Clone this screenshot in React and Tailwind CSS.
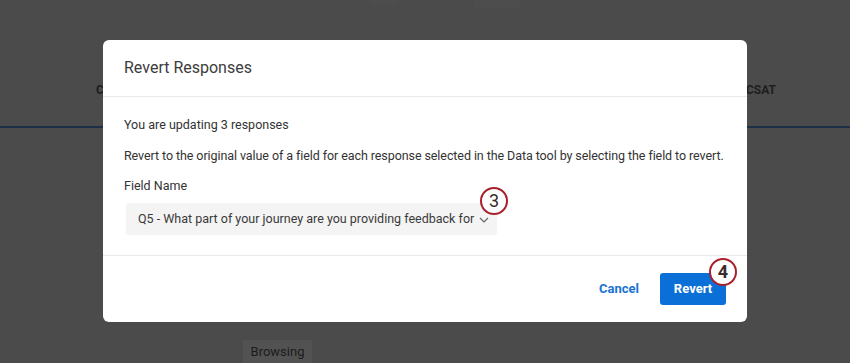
import React from "react";

function Badge({ n }) {
  return (
    <div className="w-[28px] h-[28px] rounded-full border-[2.5px] border-[#a8202b] bg-white flex items-center justify-center text-[18px] leading-none text-[#3b2b2b]" style={{ fontFamily: "Roboto, sans-serif" }}>
      {n}
    </div>
  );
}

export default function App() {
  return (
    <div className="relative w-[850px] h-[363px] overflow-hidden bg-[#4b4b4b]" style={{ fontFamily: "Roboto, 'Liberation Sans', sans-serif" }}>
      {/* background page */}
      <div className="flex flex-col h-full">
        <div className="h-[8px] flex">
          <div className="ml-[370px] w-[28px] h-[4px] bg-[#4d4d4d]" />
          <div className="ml-[76px] w-[46px] h-[8px] bg-[#4d4d4d]" />
        </div>
        <div className="h-[120px] flex items-end border-b-[2px] border-[#1c2f45]">
          <div className="flex w-full items-center h-[60px] pb-[12px] text-[12px] font-bold text-[#1e1e1e]">
            <span className="ml-[96px]">C</span>
            <span className="ml-auto mr-[74px]">CSAT</span>
          </div>
        </div>
        <div className="flex-1" />
        <div className="ml-[243px] w-[69px] h-[23px] bg-[#525252] flex items-center justify-center text-[13px] text-[#1c1c1c]">
          Browsing
        </div>
      </div>

      {/* modal */}
      <div className="absolute left-[103px] top-[40px] w-[644px] h-[282px] bg-white rounded-[6px] flex flex-col">
        <div className="h-[57px] flex items-center px-[21px] border-b border-[#e9e9e9] text-[16px] text-[#3c3c3c]">
          Revert Responses
        </div>
        <div className="flex flex-col px-[21px] pt-[20px] text-[12.5px] text-[#333]">
          <div className="h-[16px] leading-[16px]">You are updating 3 responses</div>
          <div className="h-[16px] leading-[16px] mt-[15px] whitespace-nowrap tracking-[-0.08px]">Revert to the original value of a field for each response selected in the Data tool by selecting the field to revert.</div>
          <div className="h-[16px] leading-[16px] mt-[14px]">Field Name</div>
          <div className="relative mt-[9px] ml-[2px] w-[371px] h-[32px] bg-[#f4f4f4] rounded-[3px] flex items-center pl-[12px] text-[#3a3a3a]">
            <span>Q5 - What part of your journey are you providing feedback for</span>
            <svg className="absolute left-[353px] top-[14px]" width="10" height="6" viewBox="0 0 10 6" fill="none">
              <path d="M1 1 L5 5 L9 1" stroke="#666" strokeWidth="1.2" />
            </svg>
            <div className="absolute left-[354px] top-[-16px]">
              <Badge n="3" />
            </div>
          </div>
        </div>
        <div className="mt-[20px] border-t border-[#e9e9e9] flex-1 flex items-center justify-end pr-[21px] gap-[21px]">
          <span className="text-[13px] font-bold text-[#1a73d4]">Cancel</span>
          <div className="relative w-[66px] h-[32px] bg-[#0b6fd8] rounded-[3px] flex items-center justify-center text-[13px] font-bold text-white">
            Revert
            <div className="absolute left-[49px] top-[-15px]">
              <Badge n="4" />
            </div>
          </div>
        </div>
      </div>
    </div>
  );
}
